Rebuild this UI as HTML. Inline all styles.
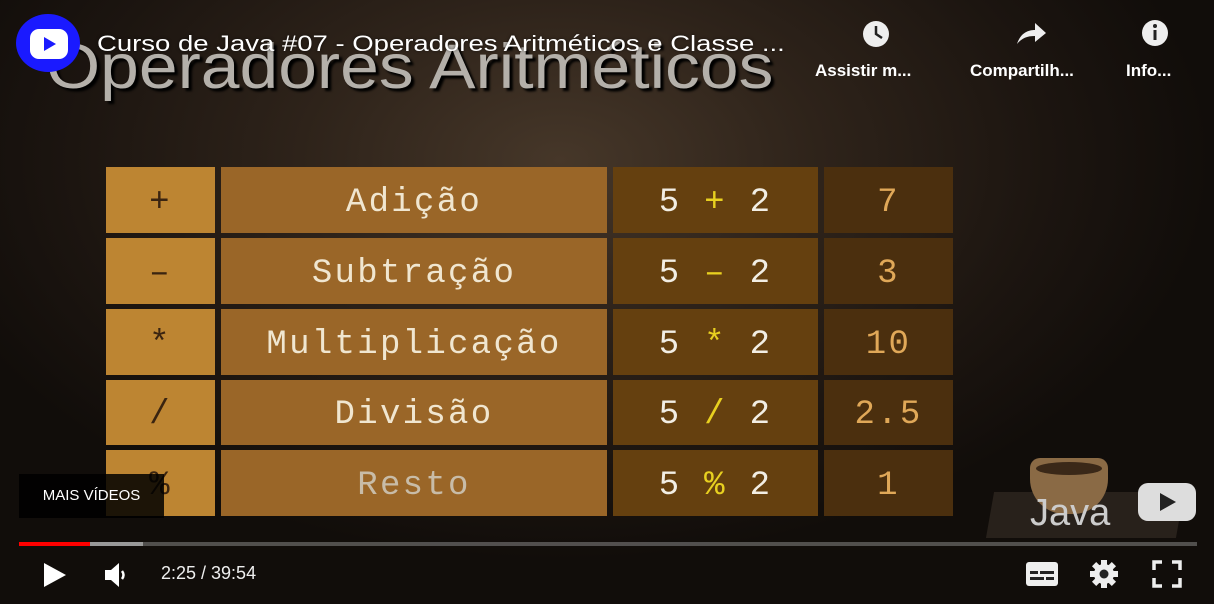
<!DOCTYPE html><html><head><style>
body{margin:0;width:1214px;height:604px;overflow:hidden;background:#0f0c0a;font-family:"Liberation Sans",sans-serif;}
#v{position:absolute;left:0;top:0;width:1214px;height:604px;background:radial-gradient(ellipse 650px 400px at 560px 160px,#463729 0%,#2e231a 40%,#1c1510 75%,#110d0a 100%);}
.big{position:absolute;left:46px;top:31px;font-size:63px;color:#b4b0aa;text-shadow:3px 3px 2px #000;transform:scaleX(1.105);transform-origin:left;}
.yt{position:absolute;left:97px;top:31px;font-size:22px;color:#fff;text-shadow:0 0 3px rgba(0,0,0,.6);transform:scaleX(1.25);transform-origin:left;white-space:nowrap;}
.c{position:absolute;display:flex;align-items:center;justify-content:center;font-family:"Liberation Mono",monospace;font-size:34px;letter-spacing:2.3px;padding-top:5px;box-sizing:border-box;}
.a{background:#bd8532;color:#3a2410;}
.b{background:#9a6628;color:#f0e6d0;}
.d{background:#65400f;color:#f2eee4;}
.e{background:#4b2f0e;color:#e0a858;}
.y{color:#e8d020;}
.ic{position:absolute;color:#fff;font-weight:bold;font-size:17px;}
</style></head><body><div id="v">
<div class="big">Operadores Aritméticos</div>
<div style="position:absolute;left:16px;top:14px;width:64px;height:58px;border-radius:50%;background:#1a1aff"></div>
<div style="position:absolute;left:30px;top:29px;width:38px;height:30px;border-radius:9px;background:#fff"></div>
<svg style="position:absolute;left:42px;top:36px" width="16" height="16"><path d="M2 1L14 8L2 15Z" fill="#1a1aff"/></svg>
<div class="yt">Curso de Java #07 - Operadores Aritméticos e Classe ...</div>
<svg style="position:absolute;left:860px;top:18px" width="32" height="32"><circle cx="16" cy="16" r="13" fill="#eee"/><path d="M16 8v8l6 4" stroke="#222" stroke-width="2.5" fill="none"/></svg>
<div class="ic" style="left:815px;top:61px">Assistir m...</div>
<svg style="position:absolute;left:1015px;top:18px" width="34" height="30"><path d="M2 26C6 14 14 12 20 12V5L31 15L20 24V18C12 18 7 20 2 26Z" fill="#eee"/></svg>
<div class="ic" style="left:970px;top:61px">Compartilh...</div>
<svg style="position:absolute;left:1139px;top:17px" width="32" height="32"><circle cx="16" cy="16" r="13" fill="#eee"/><rect x="14.5" y="13" width="3" height="10" fill="#222"/><circle cx="16" cy="9" r="2" fill="#222"/></svg>
<div class="ic" style="left:1126px;top:61px">Info...</div>

<div class="c a" style="left:106px;top:167px;width:109px;height:66px">+</div>
<div class="c b" style="left:221px;top:167px;width:386px;height:66px">Adição</div>
<div class="c d" style="left:613px;top:167px;width:205px;height:66px">5 <span class="y">&nbsp;+&nbsp;</span> 2</div>
<div class="c e" style="left:824px;top:167px;width:129px;height:66px">7</div>

<div class="c a" style="left:106px;top:238px;width:109px;height:66px">–</div>
<div class="c b" style="left:221px;top:238px;width:386px;height:66px">Subtração</div>
<div class="c d" style="left:613px;top:238px;width:205px;height:66px">5 <span class="y">&nbsp;–&nbsp;</span> 2</div>
<div class="c e" style="left:824px;top:238px;width:129px;height:66px">3</div>

<div class="c a" style="left:106px;top:309px;width:109px;height:66px">*</div>
<div class="c b" style="left:221px;top:309px;width:386px;height:66px">Multiplicação</div>
<div class="c d" style="left:613px;top:309px;width:205px;height:66px">5 <span class="y">&nbsp;*&nbsp;</span> 2</div>
<div class="c e" style="left:824px;top:309px;width:129px;height:66px">10</div>

<div class="c a" style="left:106px;top:380px;width:109px;height:65px">/</div>
<div class="c b" style="left:221px;top:380px;width:386px;height:65px">Divisão</div>
<div class="c d" style="left:613px;top:380px;width:205px;height:65px">5 <span class="y">&nbsp;/&nbsp;</span> 2</div>
<div class="c e" style="left:824px;top:380px;width:129px;height:65px">2.5</div>

<div class="c a" style="left:106px;top:450px;width:109px;height:66px">%</div>
<div class="c b" style="left:221px;top:450px;width:386px;height:66px;color:#c8bca8">Resto</div>
<div class="c d" style="left:613px;top:450px;width:205px;height:66px">5 <span class="y">&nbsp;%&nbsp;</span> 2</div>
<div class="c e" style="left:824px;top:450px;width:129px;height:66px">1</div>

<div style="position:absolute;left:19px;top:474px;width:145px;height:44px;background:rgba(0,0,0,.85);color:#fff;font-size:15px;line-height:44px;text-align:center">MAIS VÍDEOS</div>

<div style="position:absolute;left:990px;top:492px;width:190px;height:46px;background:#28211b;transform:skewX(-10deg)"></div>
<div style="position:absolute;left:1030px;top:458px;width:78px;height:56px;border-radius:10px 10px 35px 35px;background:#8a6a45"></div>
<div style="position:absolute;left:1036px;top:462px;width:66px;height:13px;border-radius:50%;background:#3a2818"></div>
<div style="position:absolute;left:1030px;top:492px;color:#ccc;font-size:38px">Java</div>
<div style="position:absolute;left:1138px;top:483px;width:58px;height:38px;border-radius:10px;background:#ddd"></div>
<svg style="position:absolute;left:1158px;top:492px" width="20" height="20"><path d="M2 1L18 10L2 19Z" fill="#222"/></svg>

<div style="position:absolute;left:19px;top:542px;width:1178px;height:4px;background:rgba(160,160,160,.45)"></div>
<div style="position:absolute;left:19px;top:542px;width:124px;height:4px;background:#999"></div>
<div style="position:absolute;left:19px;top:542px;width:71px;height:4px;background:#f00"></div>

<svg style="position:absolute;left:40px;top:560px" width="30" height="30"><path d="M4 3L26 15L4 27Z" fill="#fff"/></svg>
<svg style="position:absolute;left:103px;top:560px" width="30" height="30"><path d="M2 10H8L16 3V27L8 20H2Z" fill="#fff"/><path d="M19 11Q22 15 19 19" stroke="#fff" stroke-width="2.5" fill="none"/></svg>
<div style="position:absolute;left:161px;top:563px;color:#eee;font-size:18px">2:25 / 39:54</div>
<svg style="position:absolute;left:1025px;top:561px" width="34" height="26"><rect x="1" y="1" width="32" height="24" rx="3" fill="#eee"/><rect x="5" y="10" width="8" height="3" fill="#222"/><rect x="15" y="10" width="14" height="3" fill="#222"/><rect x="5" y="16" width="14" height="3" fill="#222"/><rect x="21" y="16" width="8" height="3" fill="#222"/></svg>
<svg style="position:absolute;left:1089px;top:559px" width="30" height="30"><g fill="#eee"><circle cx="15" cy="15" r="10"/><rect x="12" y="1" width="6" height="28"/><rect x="1" y="12" width="28" height="6"/><rect x="12" y="1" width="6" height="28" transform="rotate(45 15 15)"/><rect x="12" y="1" width="6" height="28" transform="rotate(-45 15 15)"/></g><circle cx="15" cy="15" r="4.5" fill="#222"/></svg>
<svg style="position:absolute;left:1152px;top:560px" width="30" height="28"><path d="M2 10V2H10M20 2H28V10M28 18V26H20M10 26H2V18" stroke="#eee" stroke-width="3.5" fill="none"/></svg>
</div></body></html>
